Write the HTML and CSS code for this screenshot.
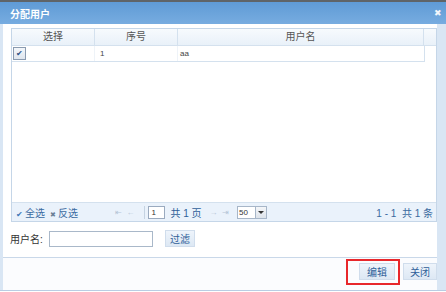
FILE: index.html
```html
<!DOCTYPE html>
<html lang="zh">
<head>
    <meta charset="UTF-8">
    <title>分配用户</title>
    <link rel="stylesheet" href="styles.css">
</head>
<body>
    <div class="dialog">
        <div class="title-bar">
            <span class="title">分配用户</span>
            <span class="close">&#x2716;</span>
        </div>
        <div class="dlg-body">
            <div class="content">
                <div class="grid">
                    <div class="grid-head">
                        <div class="col c1">选择</div>
                        <div class="col c2">序号</div>
                        <div class="col c3">用户名</div>
                        <div class="col c4"></div>
                    </div>
                    <div class="grid-rows">
                        <div class="row">
                            <div class="cell c1"><span class="chk">&#x2714;</span></div>
                            <div class="cell c2">1</div>
                            <div class="cell c3">aa</div>
                        </div>
                    </div>
                    <div class="pager">
                        <span class="sel"><span class="ico">&#x2714;</span>全选</span>
                        <span class="sel"><span class="ico x">&#x2716;</span>反选</span>
                        <span class="nav first">&#x21E4;&nbsp; &#x2190;</span>
                        <span class="sep"></span>
                        <input class="page-input" type="text" value="1">
                        <span class="pg-text">共 1 页</span>
                        <span class="nav next">&#x2192;&nbsp; &#x21E5;</span>
                        <span class="size"><span class="size-val">50</span><span class="arrow"></span></span>
                        <span class="total">1 - 1&nbsp; 共 1 条</span>
                    </div>
                </div>
                <div class="filter">
                    <label>用户名:</label>
                    <input class="filter-input" type="text">
                    <button class="btn">过滤</button>
                </div>
            </div>
            <div class="footer">
                <span class="mark"><button class="btn btn-edit">编辑</button></span>
                <button class="btn btn-close">关闭</button>
            </div>
        </div>
    </div>
</body>
</html>
```

FILE: styles.css
```css
* {
    margin: 0;
    padding: 0;
    box-sizing: border-box;
}
body {
    font-family: "Liberation Sans", "Noto Sans CJK SC", sans-serif;
    font-size: 10px;
    color: #444;
    background-color: #fff;
    width: 446px;
    height: 292px;
    overflow: hidden;
}
.dialog {
    width: 446px;
    height: 291px;
    border-top: 2px solid #5f6468;
    border-bottom: 1px solid #b9cde3;
    display: flex;
    flex-direction: column;
    background-color: #d9e6f4;
}
.title-bar {
    height: 22px;
    display: flex;
    align-items: center;
    justify-content: space-between;
    padding: 0 4px 0 10px;
    background: linear-gradient(#5f9bd6, #77ace0);
    color: #fff;
}
.title {
    font-weight: bold;
    font-size: 10px;
}
.close {
    font-size: 9px;
    color: #f2f6fb;
}
.dlg-body {
    flex: 1;
    display: flex;
    flex-direction: column;
    margin-left: 3px;
    margin-right: 9px;
    background-color: #fff;
}
.content {
    height: 233px;
    padding: 4px 0 0 8px;
}
.grid {
    height: 194px;
    border: 1px solid #c5d6e8;
    display: flex;
    flex-direction: column;
}
.grid-head {
    height: 17px;
    display: flex;
    background: linear-gradient(#f7fafd, #e9f1f9);
    border-bottom: 1px solid #d4e1ee;
}
.col {
    text-align: center;
    line-height: 16px;
    color: #555;
    border-right: 1px solid #d4e1ee;
}
.c1 { width: 83px; }
.c2 { width: 83px; }
.c3 { width: 246px; }
.c4 { flex: 1; border-right: none; }
.grid-rows {
    flex: 1;
}
.row {
    display: flex;
    width: 413px;
    height: 16px;
    border-bottom: 1px solid #d4e1ee;
    border-right: 1px solid #d4e1ee;
}
.cell {
    font-size: 8px;
    line-height: 15px;
    padding-left: 5px;
    border-right: 1px solid #eef3f8;
}
.row .c1 {
    padding-left: 1px;
    padding-top: 1px;
}
.row .c3 {
    padding-left: 2px;
    flex: 1;
    border-right: none;
}
.chk {
    display: block;
    width: 13px;
    height: 13px;
    border: 1px solid #8a9bb0;
    background: linear-gradient(#f3f6fa, #dfe6ee);
    color: #2a4f86;
    font-size: 8px;
    line-height: 11px;
    text-align: center;
}
.pager {
    height: 19px;
    display: flex;
    align-items: center;
    padding: 0 3px 0 4px;
    background-color: #eaf2fb;
    border-top: 1px solid #d4e1ee;
    color: #3b6aa0;
    white-space: nowrap;
}
.sel {
    margin-right: 5px;
}
.ico {
    font-size: 8px;
    color: #3c77b8;
    margin-right: 2px;
}
.ico.x {
    font-size: 7px;
    color: #6b7f96;
}
.nav {
    color: #b6c5d7;
    font-size: 8px;
}
.nav.first {
    margin-left: 32px;
}
.nav.next {
    margin-left: 8px;
}
.sep {
    width: 1px;
    height: 13px;
    background-color: #c5d3e2;
    margin: 0 3px 0 10px;
}
.page-input {
    width: 17px;
    height: 13px;
    border: 1px solid #9aaabf;
    font-size: 8px;
    padding-left: 2px;
    font-family: inherit;
    color: #333;
}
.pg-text {
    margin-left: 5px;
    color: #2f5f99;
}
.size {
    display: flex;
    align-items: center;
    width: 30px;
    height: 13px;
    margin-left: 8px;
    border: 1px solid #a7b6c8;
    background-color: #fff;
}
.size-val {
    flex: 1;
    font-size: 8px;
    color: #333;
    padding-left: 1px;
}
.arrow {
    width: 11px;
    height: 11px;
    border-left: 1px solid #a7b6c8;
    background: linear-gradient(#f4f6f9, #dde3ea);
    position: relative;
}
.arrow::after {
    content: "";
    position: absolute;
    left: 2px;
    top: 4px;
    border-left: 3px solid transparent;
    border-right: 3px solid transparent;
    border-top: 3px solid #333;
}
.total {
    margin-left: auto;
    font-size: 10px;
    color: #3b6aa0;
}
.filter {
    display: flex;
    align-items: center;
    margin-top: 8px;
    margin-left: -1px;
    white-space: nowrap;
}
.filter label {
    width: 39px;
    color: #333;
}
.filter-input {
    width: 104px;
    height: 16px;
    border: 1px solid #a9b8c9;
}
.btn {
    font-family: inherit;
    font-size: 10px;
    color: #2f5f99;
    background: linear-gradient(#eef4fb, #dde8f4);
    border: 1px solid #d0ddec;
    height: 17px;
    padding: 0 6px;
}
.filter .btn {
    margin-left: 12px;
    width: 30px;
    padding: 0;
}
.footer {
    flex: 1;
    display: flex;
    align-items: center;
    justify-content: flex-end;
    border-top: 1px solid #c9d8e9;
    background-color: #fbfcfe;
    padding-bottom: 5px;
}
.mark {
    display: flex;
    align-items: center;
    justify-content: center;
    width: 54px;
    height: 26px;
    border: 2px solid #e8272b;
    margin-right: 3px;
}
.btn-edit {
    width: 36px;
    margin-left: 8px;
    padding: 0;
}
.btn-close {
    width: 34px;
    padding: 0;
}
```
